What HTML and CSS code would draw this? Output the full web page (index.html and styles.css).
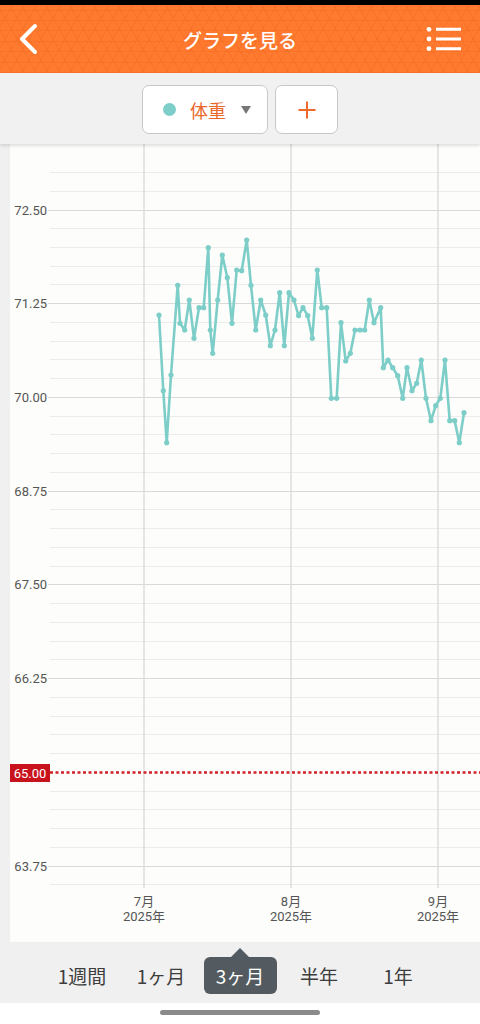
FILE: index.html
```html
<!DOCTYPE html>
<html lang="ja">
<head>
<meta charset="utf-8">
<title>グラフを見る</title>
<link rel="stylesheet" href="styles.css">
</head>
<body>
<div class="status"></div>
<header class="appbar">
  <div class="bar-side bar-left">
    <svg class="back-icon" width="20" height="32" viewBox="0 0 20 32"><path d="M17 3 L4 16 L17 29" fill="none" stroke="#fff" stroke-width="4" stroke-linecap="round" stroke-linejoin="round"/></svg>
  </div>
  <h1 class="title">グラフを見る</h1>
  <div class="bar-side bar-right">
    <svg class="menu-icon" width="38" height="26" viewBox="0 0 38 26">
      <circle cx="4" cy="3.3" r="2.4" fill="#fff"/>
      <circle cx="4" cy="13" r="2.4" fill="#fff"/>
      <circle cx="4" cy="22.7" r="2.4" fill="#fff"/>
      <path d="M11 3.3 H36 M11 13 H36 M11 22.7 H36" stroke="#fff" stroke-width="3"/>
    </svg>
  </div>
</header>
<div class="toolbar">
  <div class="select">
    <span class="dot"></span>
    <span class="select-label">体重</span>
    <span class="caret"></span>
  </div>
  <div class="add">
    <svg width="18" height="18" viewBox="0 0 18 18"><path d="M9 0.5 V17.5 M0.5 9 H17.5" stroke="#ec6a2c" stroke-width="2"/></svg>
  </div>
</div>
<main class="chart-wrap">
  <section class="chart">
    <svg class="chart-svg" width="470" height="798" viewBox="10 144 470 798">
      <defs>
        <marker id="pt" viewBox="0 0 6 6" refX="3" refY="3" markerWidth="6" markerHeight="6" markerUnits="userSpaceOnUse">
          <circle cx="3" cy="3" r="2.6" fill="#7dcec8"/>
        </marker>
      </defs>
      <g class="grid-minor">
        <line x1="50" x2="480" y1="172.5" y2="172.5"/>
        <line x1="50" x2="480" y1="191.2" y2="191.2"/>
        <line x1="50" x2="480" y1="228.7" y2="228.7"/>
        <line x1="50" x2="480" y1="247.5" y2="247.5"/>
        <line x1="50" x2="480" y1="266.2" y2="266.2"/>
        <line x1="50" x2="480" y1="284.9" y2="284.9"/>
        <line x1="50" x2="480" y1="322.4" y2="322.4"/>
        <line x1="50" x2="480" y1="341.2" y2="341.2"/>
        <line x1="50" x2="480" y1="359.9" y2="359.9"/>
        <line x1="50" x2="480" y1="378.7" y2="378.7"/>
        <line x1="50" x2="480" y1="416.1" y2="416.1"/>
        <line x1="50" x2="480" y1="434.9" y2="434.9"/>
        <line x1="50" x2="480" y1="453.6" y2="453.6"/>
        <line x1="50" x2="480" y1="472.4" y2="472.4"/>
        <line x1="50" x2="480" y1="509.9" y2="509.9"/>
        <line x1="50" x2="480" y1="528.6" y2="528.6"/>
        <line x1="50" x2="480" y1="547.3" y2="547.3"/>
        <line x1="50" x2="480" y1="566.1" y2="566.1"/>
        <line x1="50" x2="480" y1="603.6" y2="603.6"/>
        <line x1="50" x2="480" y1="622.3" y2="622.3"/>
        <line x1="50" x2="480" y1="641.1" y2="641.1"/>
        <line x1="50" x2="480" y1="659.8" y2="659.8"/>
        <line x1="50" x2="480" y1="697.3" y2="697.3"/>
        <line x1="50" x2="480" y1="716.0" y2="716.0"/>
        <line x1="50" x2="480" y1="734.8" y2="734.8"/>
        <line x1="50" x2="480" y1="753.5" y2="753.5"/>
        <line x1="50" x2="480" y1="791.0" y2="791.0"/>
        <line x1="50" x2="480" y1="809.8" y2="809.8"/>
        <line x1="50" x2="480" y1="828.5" y2="828.5"/>
        <line x1="50" x2="480" y1="847.3" y2="847.3"/>
        <line x1="50" x2="480" y1="884.8" y2="884.8"/>
      </g>
      <g class="grid-major">
        <line x1="48" x2="480" y1="210" y2="210"/>
        <line x1="48" x2="480" y1="303.7" y2="303.7"/>
        <line x1="48" x2="480" y1="397.4" y2="397.4"/>
        <line x1="48" x2="480" y1="491.1" y2="491.1"/>
        <line x1="48" x2="480" y1="584.8" y2="584.8"/>
        <line x1="48" x2="480" y1="678.6" y2="678.6"/>
        <line x1="48" x2="480" y1="866" y2="866"/>
      </g>
      <g class="grid-vert">
        <line x1="144" x2="144" y1="144" y2="888"/>
        <line x1="291" x2="291" y1="144" y2="888"/>
        <line x1="438" x2="438" y1="144" y2="888"/>
      </g>
      <g class="y-labels">
        <text x="47" y="210">72.50</text>
        <text x="47" y="303.7">71.25</text>
        <text x="47" y="397.4">70.00</text>
        <text x="47" y="491.1">68.75</text>
        <text x="47" y="584.8">67.50</text>
        <text x="47" y="678.6">66.25</text>
        <text x="47" y="866">63.75</text>
      </g>
      <line class="target-line" x1="50" x2="480" y1="772.5" y2="772.5"/>
      <rect class="target-box" x="10" y="764" width="40" height="18"/>
      <text class="target-text" x="30" y="773">65.00</text>
      <g class="x-labels">
        <text x="144" y="901">7月</text>
        <text x="144" y="916">2025年</text>
        <text x="291" y="901">8月</text>
        <text x="291" y="916">2025年</text>
        <text x="438" y="901">9月</text>
        <text x="438" y="916">2025年</text>
      </g>
      <polyline class="series" points="159,315 163.3,390.7 166.7,442.7 171,375 177.7,285.3 180,323.3 184.7,330 189.3,300 194,338.3 199,307.7 203.7,307.7 208.3,247.7 210.3,330 212.7,353.3 217.7,300 222.3,255 227.3,277.7 232,323.3 236.7,270 241.7,270.7 246.7,240 251,285.3 255.7,330 260.7,300 265.7,315 270.3,345.7 275,330 279.7,292.7 284.3,345.7 289,292.7 294,300 298.5,315.7 303,307.7 307.7,315.7 312.3,338.3 317.3,270 321.7,307.7 326.7,307.7 331.3,398.3 336.7,398.3 341,322.7 345.7,361 350.3,353.3 355,330 360,330 364.7,330 369.3,300 374,322.7 380.7,307.7 383.3,367.7 388,360 392.7,367.7 397.7,375.7 402.7,398.3 407,367.7 412,390.7 416.7,383.3 421.3,360 426,398.3 431,420.7 435.7,405.7 440.3,398.3 445,360 449.7,420.7 454.7,420.7 459.3,442.7 464,412.7"/>
    </svg>
  </section>
</main>
<nav class="periods">
  <span class="tab">1週間</span>
  <span class="tab">1ヶ月</span>
  <span class="tab"><span class="pill">3ヶ月</span></span>
  <span class="tab">半年</span>
  <span class="tab">1年</span>
</nav>
<div class="home"><span class="home-bar"></span></div>
</body>
</html>
```
FILE: styles.css
```css
html, body {
  margin: 0;
  padding: 0;
}
body {
  width: 480px;
  height: 1024px;
  overflow: hidden;
  background: #ffffff;
  font-family: Roboto, "Noto Sans CJK JP", sans-serif;
}
.status {
  height: 5px;
  background: #000;
}
.appbar {
  height: 68px;
  display: flex;
  align-items: center;
  padding: 0 17px;
  box-sizing: border-box;
  background-color: #ff7a2f;
  background-image:
    repeating-linear-gradient(0deg, rgba(214,80,10,0.16) 0 1px, transparent 1px 10.4px),
    repeating-linear-gradient(60deg, rgba(214,80,10,0.16) 0 1px, transparent 1px 10.4px),
    repeating-linear-gradient(120deg, rgba(214,80,10,0.16) 0 1px, transparent 1px 10.4px);
}
.bar-side {
  width: 56px;
  height: 68px;
  display: flex;
  align-items: center;
}
.bar-left {
  justify-content: flex-start;
}
.back-icon {
  margin-left: 1px;
  display: block;
}
.bar-right {
  justify-content: flex-end;
}
.menu-icon {
  display: block;
}
.title {
  flex: 1;
  margin: 0;
  text-align: center;
  color: #fff;
  font-family: "Noto Sans CJK JP", sans-serif;
  font-size: 19px;
  font-weight: 500;
  line-height: 1;
}
.toolbar {
  position: relative;
  z-index: 1;
  height: 71px;
  box-sizing: border-box;
  padding-top: 12px;
  display: flex;
  justify-content: center;
  gap: 7px;
  background: #f1f1f1;
  box-shadow: 0 2px 3px rgba(0,0,0,0.12);
}
.select, .add {
  height: 49px;
  box-sizing: border-box;
  border: 1px solid #c8c8c8;
  border-radius: 7px;
  background: #fff;
  display: flex;
  align-items: center;
}
.select {
  width: 126px;
  padding-left: 20px;
}
.dot {
  width: 13px;
  height: 13px;
  border-radius: 50%;
  background: #7dcec8;
  margin-right: 14px;
}
.select-label {
  font-family: "Noto Sans CJK JP", sans-serif;
  font-size: 18px;
  line-height: 1;
  color: #e9692c;
  margin-right: 15px;
}
.caret {
  width: 0;
  height: 0;
  border-left: 5px solid transparent;
  border-right: 5px solid transparent;
  border-top: 8px solid #777;
}
.add {
  width: 63px;
  justify-content: center;
}
.add svg {
  display: block;
}
.chart-wrap {
  display: block;
  background: #f0f0f0;
  padding-left: 10px;
}
.chart {
  height: 798px;
  background: #fdfdfb;
}
.chart-svg {
  display: block;
}
.grid-minor line {
  stroke: #ececec;
  stroke-width: 1;
  shape-rendering: crispEdges;
}
.grid-major line {
  stroke: #d9d9d9;
  stroke-width: 1;
  shape-rendering: crispEdges;
}
.grid-vert line {
  stroke: #dcdcdc;
  stroke-width: 1.5;
}
.y-labels text {
  font-family: Roboto, sans-serif;
  font-size: 13px;
  fill: #555;
  text-anchor: end;
  dominant-baseline: central;
}
.target-line {
  stroke: #d02228;
  stroke-width: 2.5;
  stroke-dasharray: 3 2.5;
}
.target-box {
  fill: #c8131c;
}
.target-text {
  font-family: Roboto, sans-serif;
  font-size: 13px;
  fill: #fff;
  text-anchor: middle;
  dominant-baseline: central;
}
.x-labels text {
  font-family: Roboto, "Noto Sans CJK JP", sans-serif;
  font-size: 13px;
  fill: #555;
  text-anchor: middle;
  dominant-baseline: central;
}
.series {
  fill: none;
  stroke: #7dcec8;
  stroke-width: 2.6;
  stroke-linejoin: round;
  marker-start: url(#pt);
  marker-mid: url(#pt);
  marker-end: url(#pt);
}
.periods {
  height: 61px;
  box-sizing: border-box;
  padding-top: 6px;
  display: flex;
  justify-content: center;
  align-items: center;
  background: #f0f0f0;
}
.tab {
  width: 79px;
  display: flex;
  justify-content: center;
  font-family: "Noto Sans CJK JP", sans-serif;
  font-size: 19px;
  line-height: 37px;
  color: #3d3d3d;
}
.pill {
  position: relative;
  width: 73px;
  height: 37px;
  border-radius: 6px;
  background: #545b60;
  color: #fff;
  text-align: center;
}
.pill::before {
  content: "";
  position: absolute;
  left: 50%;
  top: -9px;
  margin-left: -9px;
  border-left: 9px solid transparent;
  border-right: 9px solid transparent;
  border-bottom: 9px solid #545b60;
}
.home {
  height: 21px;
  box-sizing: border-box;
  padding-top: 7px;
  display: flex;
  justify-content: center;
  background: #fff;
}
.home-bar {
  width: 160px;
  height: 5px;
  border-radius: 3px;
  background: #8a8a8a;
}
```
